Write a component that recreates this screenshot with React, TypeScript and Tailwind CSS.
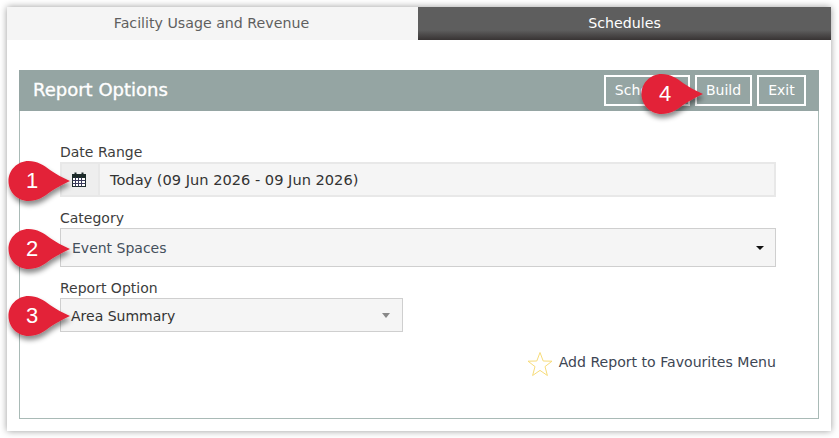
import React from "react";

function Pin({ n, className }: { n: number; className: string }) {
  return (
    <div className={`absolute w-[64px] h-[44px] ${className}`}>
      <svg width="64" height="48" viewBox="0 0 64 48" className="absolute left-0 top-0 overflow-visible">
        <defs>
          <filter id={`s${n}`} x="-20%" y="-20%" width="140%" height="150%">
            <feDropShadow dx="1" dy="4" stdDeviation="2.5" floodColor="#000" floodOpacity="0.45" />
          </filter>
        </defs>
        <path
          d="M20.5 1 C29 1 36 5 42 10 C48 14 55 18 62 21 C55 24 48 28 42 32 C36 37 29 41 20.5 41 C9.5 41 0.5 32 0.5 21 C0.5 10 9.5 1 20.5 1 Z"
          fill="#e32237"
          filter={`url(#s${n})`}
        />
      </svg>
      <span className="absolute left-[14px] top-[9px] w-[20px] text-center text-[22px] leading-[24px] text-white font-['Liberation_Sans',sans-serif]">
        {n}
      </span>
    </div>
  );
}

function Calendar() {
  return (
    <svg width="14" height="15" viewBox="0 0 14 15" fill="none" stroke="#1c2b2a" strokeWidth="1">
      <rect x="0.5" y="2.5" width="13" height="12" fill="#fff" />
      <rect x="0.5" y="2.5" width="13" height="3" fill="#1c2b2a" />
      <path d="M0.5 8.5H13.5M0.5 11.5H13.5M3.5 5.5V14.5M6.5 5.5V14.5M9.5 5.5V14.5" stroke="#3b3b5c" />
      <path d="M3.5 0.5V3.5M10.5 0.5V3.5" strokeWidth="2" />
    </svg>
  );
}

export default function App() {
  return (
    <div className="w-[839px] h-[438px] bg-white p-[7px] font-['DejaVu_Sans',sans-serif] text-[14px] overflow-hidden">
      <div className="relative w-[824px] h-[424px] bg-white shadow-[0_0_7px_rgba(0,0,0,0.4)]">
        <div className="flex h-[33px]">
          <div className="w-[411px] bg-[#f5f5f5] text-[#5f5f5f] flex items-center justify-center text-[14.2px] pr-[2px]">
            Facility Usage and Revenue
          </div>
          <div className="flex-1 bg-gradient-to-b from-[#5e5e5e] from-[70%] to-[#383434] text-white flex items-center justify-center text-[14.2px]">
            Schedules
          </div>
        </div>
        <div className="mx-[12px] mt-[30px] h-[349px] border border-[#a9bab6] border-t-0">
          <div className="-mx-px h-[41px] bg-[#95a5a3] flex items-center justify-between pl-[14px] pr-[13px]">
            <span className="text-white text-[18px] pb-[2px] [-webkit-text-stroke:0.35px_white]">Report Options</span>
            <div className="flex gap-[5px]">
              <button className="w-[86px] h-[31px] border-2 border-white text-white">Schedule</button>
              <button className="w-[57px] h-[31px] border-2 border-white text-white">Build</button>
              <button className="w-[49px] h-[31px] border-2 border-white text-white">Exit</button>
            </div>
          </div>
          <div className="pl-[40px] pr-[42px] pt-[32px] text-[#333]">
            <label className="block leading-[19px] h-[19px] text-[#3d3d3d]">Date Range</label>
            <div className="flex h-[35px] border-2 border-[#e8e8e8] bg-[#f5f5f5]">
              <div className="w-[38px] bg-[#eeeeee] flex items-center justify-center border-r-2 border-r-[#e8e8e8] pr-[2px]">
                <Calendar />
              </div>
              <div className="flex-1 flex items-center pl-[10px] text-[14.6px]">Today (09 Jun 2026 - 09 Jun 2026)</div>
            </div>
            <label className="block mt-[12px] leading-[19px] h-[19px] text-[#3d3d3d]">Category</label>
            <div className="flex items-center justify-between h-[39px] border border-[#cfcfcf] bg-[#f5f5f5] pl-[11px] pr-[11px] text-[#44505c]">
              <span className="pt-[1px]">Event Spaces</span>
              <span className="w-0 h-0 border-x-[4px] border-x-transparent border-t-[4px] border-t-[#111]" />
            </div>
            <label className="block mt-[12px] leading-[19px] h-[19px] text-[#3d3d3d]">Report Option</label>
            <div className="flex items-center justify-between w-[343px] h-[34px] border border-[#cfcfcf] bg-[#f5f5f5] pl-[10px] pr-[12px]">
              <span className="pt-[2px]">Area Summary</span>
              <span className="w-0 h-0 border-x-[4px] border-x-transparent border-t-[5px] border-t-[#888]" />
            </div>
            <div className="flex justify-end items-center gap-[5px] mt-[19px] h-[26px] text-[#3d4654]">
              <svg width="26" height="26" viewBox="0 0 26 26" fill="none" stroke="#f7dc7a" strokeWidth="1" className="mr-[1px]">
                <path d="M13 1.5 L16.2 10 L25 10.2 L18 15.6 L20.4 24.5 L13 19.4 L5.6 24.5 L8 15.6 L1 10.2 L9.8 10 Z" />
              </svg>
              <span className="text-[14.1px] pb-[2px]">Add Report to Favourites Menu</span>
            </div>
          </div>
        </div>
        <Pin n={1} className="left-[1px] top-[153px]" />
        <Pin n={2} className="left-[1px] top-[221px]" />
        <Pin n={3} className="left-[1px] top-[288px]" />
        <Pin n={4} className="left-[634px] top-[66px]" />
      </div>
    </div>
  );
}
